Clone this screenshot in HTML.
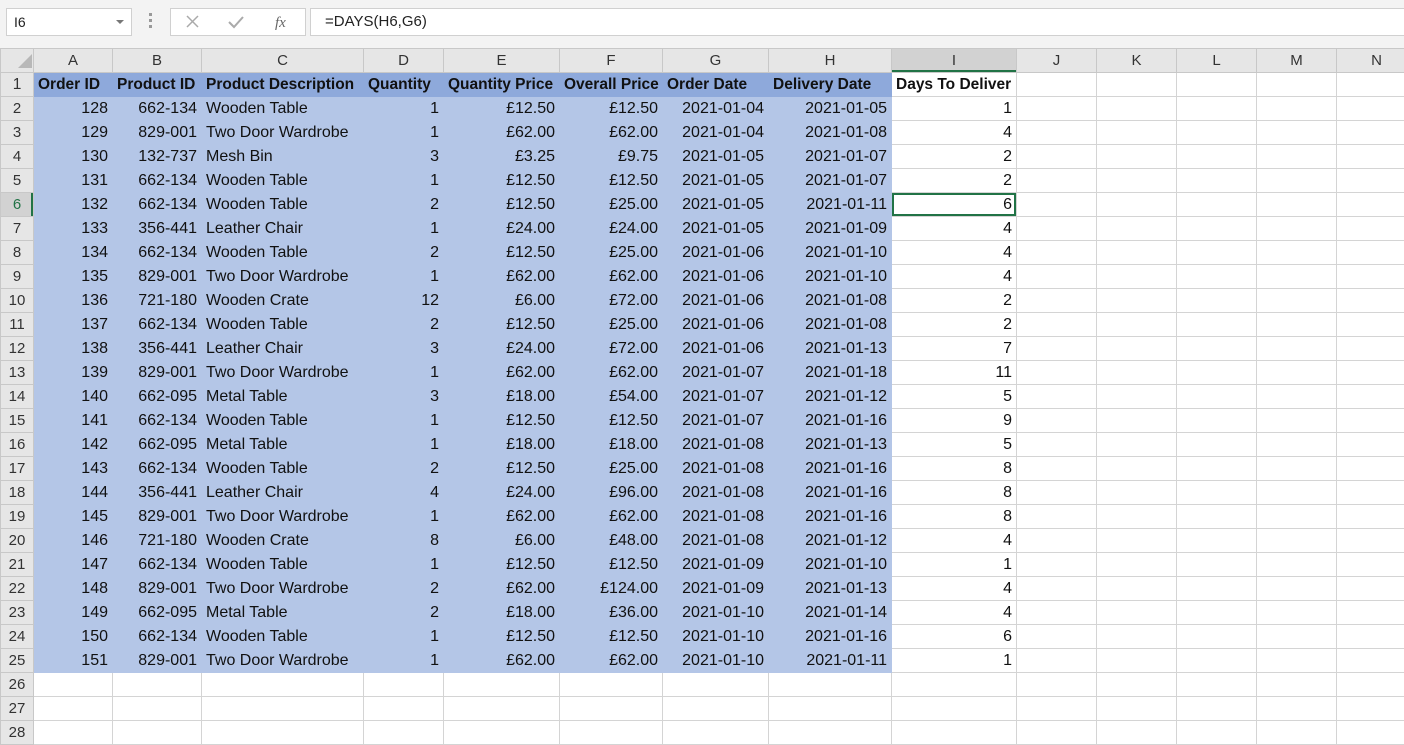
<!DOCTYPE html>
<html><head><meta charset="utf-8"><style>
body{margin:0;width:1404px;height:732px;overflow:hidden;background:#F3F3F3;font-family:"Liberation Sans",sans-serif;position:relative}
.nb{position:absolute;left:6px;top:8px;width:126px;height:28px;background:#fff;border:1px solid #D0D0D0;font-size:14px;line-height:26px;padding-left:7px;box-sizing:border-box;color:#222}
.nb:after{content:"";position:absolute;right:7px;top:11px;border:4px solid transparent;border-top:4px solid #777}
.dots{position:absolute;left:149px;top:13px;width:3px;height:16px;background:repeating-linear-gradient(#999 0 3px,transparent 3px 6px)}
.ic{position:absolute;left:170px;top:8px;width:136px;height:28px;background:#fff;border:1px solid #D0D0D0;box-sizing:border-box}
.fb{position:absolute;left:310px;top:8px;width:1100px;height:28px;background:#fff;border:1px solid #D0D0D0;box-sizing:border-box;font-size:15px;line-height:26px;padding-left:14px;color:#222}
table{position:absolute;left:0;top:48px;width:1416px;border-collapse:collapse;table-layout:fixed;font-size:16px;color:#111}
tr{height:24px}
td{height:23px;line-height:22px;border:1px solid #D4D4D4;padding:0 4px;white-space:nowrap;overflow:hidden;background:#fff;box-sizing:border-box}
tr.h td{background:#E6E6E6;text-align:center;font-size:15px;color:#333;border-color:#C8C8C8}
td.r{background:#E6E6E6;text-align:center;padding:0;font-size:15px;color:#333;border-color:#C8C8C8}
tr.t td{font-size:15.5px}
tr.t td.b{background:#8EA9DB;border-color:#8EA9DB;font-weight:bold}
td.b{background:#B4C6E7;border-color:#B4C6E7}
.n{text-align:right}
</style></head><body>
<div class="nb">I6</div>
<div class="dots"></div>
<div class="ic"><svg width="136" height="26"><path d="M16 7l11 11M27 7L16 18" stroke="#aaa" stroke-width="1.5"/><path d="M58 13l5 5 9-10" stroke="#aaa" stroke-width="2" fill="none"/><text x="104" y="18" font-family="Liberation Serif" font-style="italic" font-size="15" fill="#666">fx</text></svg></div>
<div class="fb">=DAYS(H6,G6)</div>
<table>
<colgroup><col style="width:33px"><col style="width:79px"><col style="width:89px"><col style="width:162px"><col style="width:80px"><col style="width:116px"><col style="width:103px"><col style="width:106px"><col style="width:123px"><col style="width:125px"><col style="width:80px"><col style="width:80px"><col style="width:80px"><col style="width:80px"><col style="width:80px"></colgroup>
<tr class="h"><td style="background:#E6E6E6"><svg width="14" height="14" style="position:relative;left:8px;top:3px"><path d="M14 0V14H0Z" fill="#B8B8B8"/></svg></td><td>A</td><td>B</td><td>C</td><td>D</td><td>E</td><td>F</td><td>G</td><td>H</td><td style="background:#D2D2D2;box-shadow:inset 0 -2px 0 #217346">I</td><td>J</td><td>K</td><td>L</td><td>M</td><td>N</td></tr>
<tr class="t"><td class="r">1</td><td class="b">Order ID</td><td class="b">Product ID</td><td class="b">Product Description</td><td class="b">Quantity</td><td class="b">Quantity Price</td><td class="b">Overall Price</td><td class="b">Order Date</td><td class="b">Delivery Date</td><td style="font-weight:bold">Days To Deliver</td><td></td><td></td><td></td><td></td><td></td></tr>
<tr><td class="r">2</td><td class="b n">128</td><td class="b n">662-134</td><td class="b">Wooden Table</td><td class="b n">1</td><td class="b n">£12.50</td><td class="b n">£12.50</td><td class="b n">2021-01-04</td><td class="b n">2021-01-05</td><td class="n">1</td><td></td><td></td><td></td><td></td><td></td></tr>
<tr><td class="r">3</td><td class="b n">129</td><td class="b n">829-001</td><td class="b">Two Door Wardrobe</td><td class="b n">1</td><td class="b n">£62.00</td><td class="b n">£62.00</td><td class="b n">2021-01-04</td><td class="b n">2021-01-08</td><td class="n">4</td><td></td><td></td><td></td><td></td><td></td></tr>
<tr><td class="r">4</td><td class="b n">130</td><td class="b n">132-737</td><td class="b">Mesh Bin</td><td class="b n">3</td><td class="b n">£3.25</td><td class="b n">£9.75</td><td class="b n">2021-01-05</td><td class="b n">2021-01-07</td><td class="n">2</td><td></td><td></td><td></td><td></td><td></td></tr>
<tr><td class="r">5</td><td class="b n">131</td><td class="b n">662-134</td><td class="b">Wooden Table</td><td class="b n">1</td><td class="b n">£12.50</td><td class="b n">£12.50</td><td class="b n">2021-01-05</td><td class="b n">2021-01-07</td><td class="n">2</td><td></td><td></td><td></td><td></td><td></td></tr>
<tr><td class="r" style="background:#D2D2D2;color:#217346;box-shadow:inset -2px 0 0 #217346">6</td><td class="b n">132</td><td class="b n">662-134</td><td class="b">Wooden Table</td><td class="b n">2</td><td class="b n">£12.50</td><td class="b n">£25.00</td><td class="b n">2021-01-05</td><td class="b n">2021-01-11</td><td class="n" style="box-shadow:inset 0 0 0 2px #217346">6</td><td></td><td></td><td></td><td></td><td></td></tr>
<tr><td class="r">7</td><td class="b n">133</td><td class="b n">356-441</td><td class="b">Leather Chair</td><td class="b n">1</td><td class="b n">£24.00</td><td class="b n">£24.00</td><td class="b n">2021-01-05</td><td class="b n">2021-01-09</td><td class="n">4</td><td></td><td></td><td></td><td></td><td></td></tr>
<tr><td class="r">8</td><td class="b n">134</td><td class="b n">662-134</td><td class="b">Wooden Table</td><td class="b n">2</td><td class="b n">£12.50</td><td class="b n">£25.00</td><td class="b n">2021-01-06</td><td class="b n">2021-01-10</td><td class="n">4</td><td></td><td></td><td></td><td></td><td></td></tr>
<tr><td class="r">9</td><td class="b n">135</td><td class="b n">829-001</td><td class="b">Two Door Wardrobe</td><td class="b n">1</td><td class="b n">£62.00</td><td class="b n">£62.00</td><td class="b n">2021-01-06</td><td class="b n">2021-01-10</td><td class="n">4</td><td></td><td></td><td></td><td></td><td></td></tr>
<tr><td class="r">10</td><td class="b n">136</td><td class="b n">721-180</td><td class="b">Wooden Crate</td><td class="b n">12</td><td class="b n">£6.00</td><td class="b n">£72.00</td><td class="b n">2021-01-06</td><td class="b n">2021-01-08</td><td class="n">2</td><td></td><td></td><td></td><td></td><td></td></tr>
<tr><td class="r">11</td><td class="b n">137</td><td class="b n">662-134</td><td class="b">Wooden Table</td><td class="b n">2</td><td class="b n">£12.50</td><td class="b n">£25.00</td><td class="b n">2021-01-06</td><td class="b n">2021-01-08</td><td class="n">2</td><td></td><td></td><td></td><td></td><td></td></tr>
<tr><td class="r">12</td><td class="b n">138</td><td class="b n">356-441</td><td class="b">Leather Chair</td><td class="b n">3</td><td class="b n">£24.00</td><td class="b n">£72.00</td><td class="b n">2021-01-06</td><td class="b n">2021-01-13</td><td class="n">7</td><td></td><td></td><td></td><td></td><td></td></tr>
<tr><td class="r">13</td><td class="b n">139</td><td class="b n">829-001</td><td class="b">Two Door Wardrobe</td><td class="b n">1</td><td class="b n">£62.00</td><td class="b n">£62.00</td><td class="b n">2021-01-07</td><td class="b n">2021-01-18</td><td class="n">11</td><td></td><td></td><td></td><td></td><td></td></tr>
<tr><td class="r">14</td><td class="b n">140</td><td class="b n">662-095</td><td class="b">Metal Table</td><td class="b n">3</td><td class="b n">£18.00</td><td class="b n">£54.00</td><td class="b n">2021-01-07</td><td class="b n">2021-01-12</td><td class="n">5</td><td></td><td></td><td></td><td></td><td></td></tr>
<tr><td class="r">15</td><td class="b n">141</td><td class="b n">662-134</td><td class="b">Wooden Table</td><td class="b n">1</td><td class="b n">£12.50</td><td class="b n">£12.50</td><td class="b n">2021-01-07</td><td class="b n">2021-01-16</td><td class="n">9</td><td></td><td></td><td></td><td></td><td></td></tr>
<tr><td class="r">16</td><td class="b n">142</td><td class="b n">662-095</td><td class="b">Metal Table</td><td class="b n">1</td><td class="b n">£18.00</td><td class="b n">£18.00</td><td class="b n">2021-01-08</td><td class="b n">2021-01-13</td><td class="n">5</td><td></td><td></td><td></td><td></td><td></td></tr>
<tr><td class="r">17</td><td class="b n">143</td><td class="b n">662-134</td><td class="b">Wooden Table</td><td class="b n">2</td><td class="b n">£12.50</td><td class="b n">£25.00</td><td class="b n">2021-01-08</td><td class="b n">2021-01-16</td><td class="n">8</td><td></td><td></td><td></td><td></td><td></td></tr>
<tr><td class="r">18</td><td class="b n">144</td><td class="b n">356-441</td><td class="b">Leather Chair</td><td class="b n">4</td><td class="b n">£24.00</td><td class="b n">£96.00</td><td class="b n">2021-01-08</td><td class="b n">2021-01-16</td><td class="n">8</td><td></td><td></td><td></td><td></td><td></td></tr>
<tr><td class="r">19</td><td class="b n">145</td><td class="b n">829-001</td><td class="b">Two Door Wardrobe</td><td class="b n">1</td><td class="b n">£62.00</td><td class="b n">£62.00</td><td class="b n">2021-01-08</td><td class="b n">2021-01-16</td><td class="n">8</td><td></td><td></td><td></td><td></td><td></td></tr>
<tr><td class="r">20</td><td class="b n">146</td><td class="b n">721-180</td><td class="b">Wooden Crate</td><td class="b n">8</td><td class="b n">£6.00</td><td class="b n">£48.00</td><td class="b n">2021-01-08</td><td class="b n">2021-01-12</td><td class="n">4</td><td></td><td></td><td></td><td></td><td></td></tr>
<tr><td class="r">21</td><td class="b n">147</td><td class="b n">662-134</td><td class="b">Wooden Table</td><td class="b n">1</td><td class="b n">£12.50</td><td class="b n">£12.50</td><td class="b n">2021-01-09</td><td class="b n">2021-01-10</td><td class="n">1</td><td></td><td></td><td></td><td></td><td></td></tr>
<tr><td class="r">22</td><td class="b n">148</td><td class="b n">829-001</td><td class="b">Two Door Wardrobe</td><td class="b n">2</td><td class="b n">£62.00</td><td class="b n">£124.00</td><td class="b n">2021-01-09</td><td class="b n">2021-01-13</td><td class="n">4</td><td></td><td></td><td></td><td></td><td></td></tr>
<tr><td class="r">23</td><td class="b n">149</td><td class="b n">662-095</td><td class="b">Metal Table</td><td class="b n">2</td><td class="b n">£18.00</td><td class="b n">£36.00</td><td class="b n">2021-01-10</td><td class="b n">2021-01-14</td><td class="n">4</td><td></td><td></td><td></td><td></td><td></td></tr>
<tr><td class="r">24</td><td class="b n">150</td><td class="b n">662-134</td><td class="b">Wooden Table</td><td class="b n">1</td><td class="b n">£12.50</td><td class="b n">£12.50</td><td class="b n">2021-01-10</td><td class="b n">2021-01-16</td><td class="n">6</td><td></td><td></td><td></td><td></td><td></td></tr>
<tr><td class="r">25</td><td class="b n">151</td><td class="b n">829-001</td><td class="b">Two Door Wardrobe</td><td class="b n">1</td><td class="b n">£62.00</td><td class="b n">£62.00</td><td class="b n">2021-01-10</td><td class="b n">2021-01-11</td><td class="n">1</td><td></td><td></td><td></td><td></td><td></td></tr>
<tr><td class="r">26</td><td></td><td></td><td></td><td></td><td></td><td></td><td></td><td></td><td></td><td></td><td></td><td></td><td></td><td></td></tr>
<tr><td class="r">27</td><td></td><td></td><td></td><td></td><td></td><td></td><td></td><td></td><td></td><td></td><td></td><td></td><td></td><td></td></tr>
<tr><td class="r">28</td><td></td><td></td><td></td><td></td><td></td><td></td><td></td><td></td><td></td><td></td><td></td><td></td><td></td><td></td></tr>
</table>
</body></html>
